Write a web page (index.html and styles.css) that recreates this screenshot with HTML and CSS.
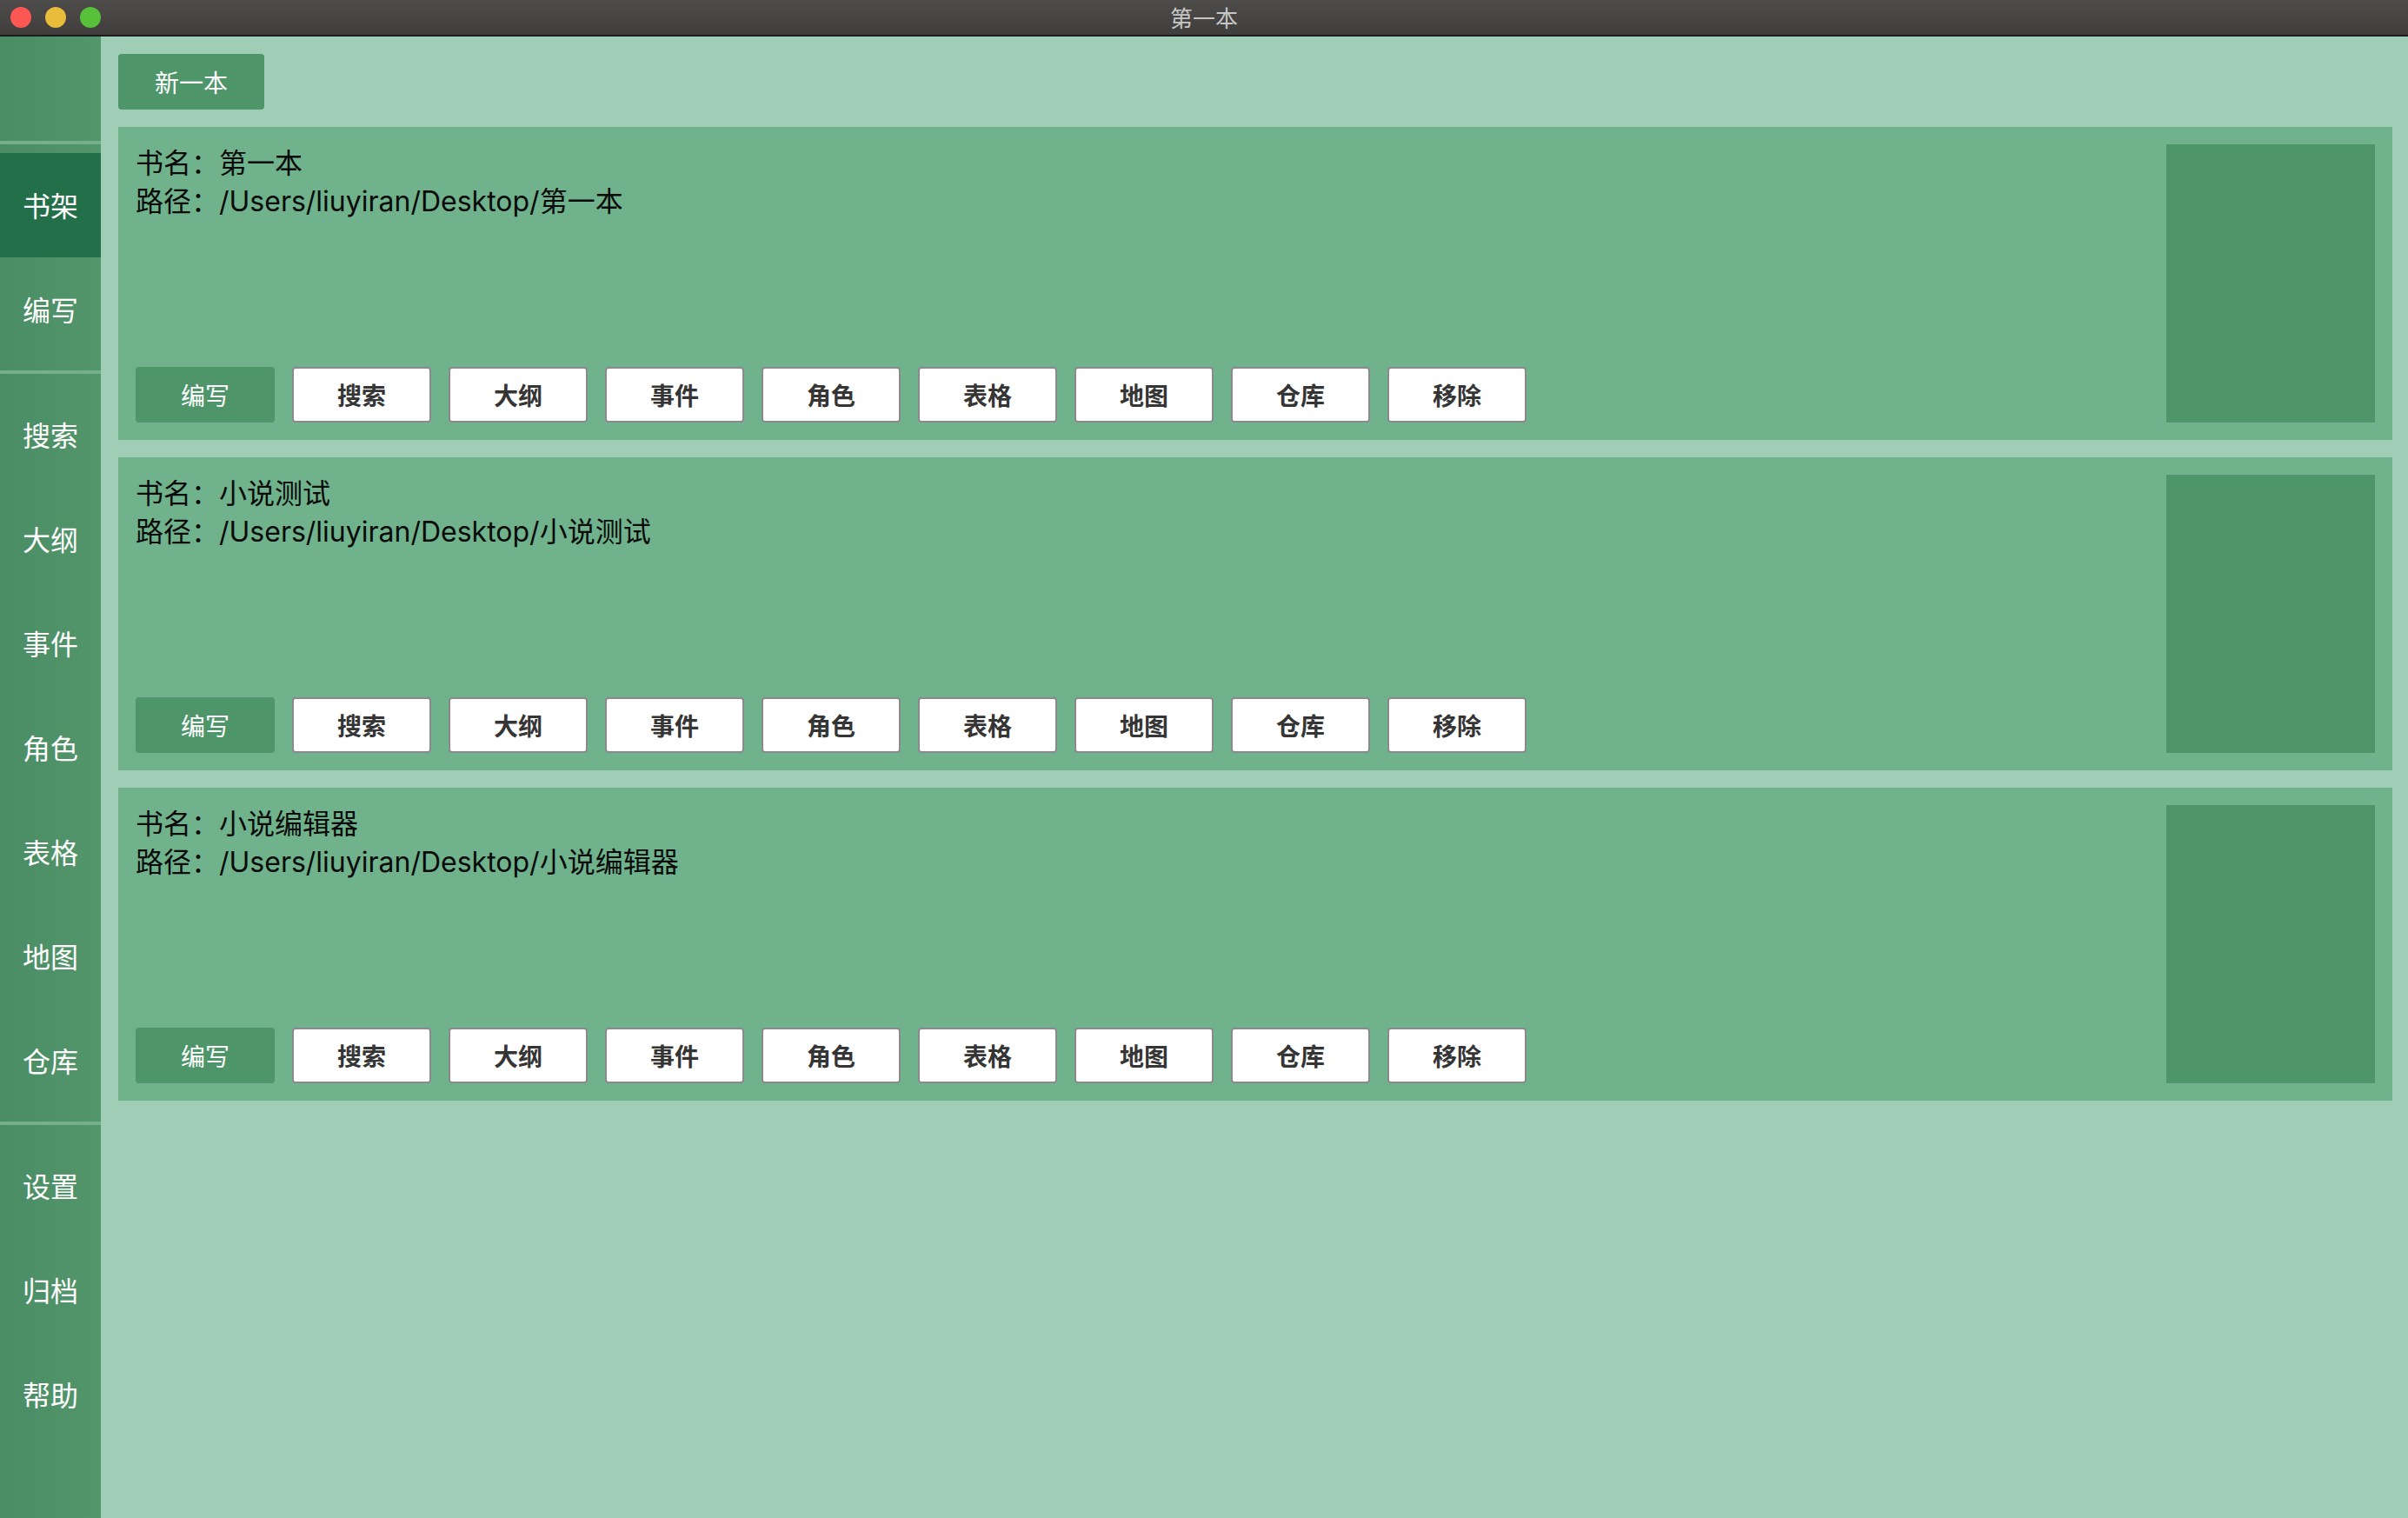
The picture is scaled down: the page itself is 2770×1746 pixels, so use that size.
FILE: index.html
```html
<!DOCTYPE html>
<html lang="zh-CN">
<head>
<meta charset="utf-8">
<title>第一本</title>
<link rel="stylesheet" href="styles.css">
</head>
<body>
<div class="window">
  <header class="titlebar">
    <div class="lights">
      <span class="light red"></span>
      <span class="light yellow"></span>
      <span class="light green"></span>
    </div>
    <div class="title">第一本</div>
    <div class="spacer"></div>
  </header>
  <div class="body">
    <nav class="sidebar">
      <div class="brand"></div>
      <div class="sep"></div>
      <div class="group">
        <div class="nav-item active">书架</div>
        <div class="nav-item">编写</div>
      </div>
      <div class="sep"></div>
      <div class="group">
        <div class="nav-item">搜索</div>
        <div class="nav-item">大纲</div>
        <div class="nav-item">事件</div>
        <div class="nav-item">角色</div>
        <div class="nav-item">表格</div>
        <div class="nav-item">地图</div>
        <div class="nav-item">仓库</div>
      </div>
      <div class="sep"></div>
      <div class="group">
        <div class="nav-item">设置</div>
        <div class="nav-item">归档</div>
        <div class="nav-item">帮助</div>
      </div>
    </nav>
    <main class="content">
      <div class="toolbar">
        <button class="btn btn-primary btn-new">新一本</button>
      </div>

      <section class="book">
        <div class="book-main">
          <div class="book-info">
            <div class="line">书名：第一本</div>
            <div class="line">路径：/Users/liuyiran/Desktop/第一本</div>
          </div>
          <div class="actions">
            <button class="btn btn-primary">编写</button>
            <button class="btn">搜索</button>
            <button class="btn">大纲</button>
            <button class="btn">事件</button>
            <button class="btn">角色</button>
            <button class="btn">表格</button>
            <button class="btn">地图</button>
            <button class="btn">仓库</button>
            <button class="btn">移除</button>
          </div>
        </div>
        <div class="cover"></div>
      </section>

      <section class="book">
        <div class="book-main">
          <div class="book-info">
            <div class="line">书名：小说测试</div>
            <div class="line">路径：/Users/liuyiran/Desktop/小说测试</div>
          </div>
          <div class="actions">
            <button class="btn btn-primary">编写</button>
            <button class="btn">搜索</button>
            <button class="btn">大纲</button>
            <button class="btn">事件</button>
            <button class="btn">角色</button>
            <button class="btn">表格</button>
            <button class="btn">地图</button>
            <button class="btn">仓库</button>
            <button class="btn">移除</button>
          </div>
        </div>
        <div class="cover"></div>
      </section>

      <section class="book">
        <div class="book-main">
          <div class="book-info">
            <div class="line">书名：小说编辑器</div>
            <div class="line">路径：/Users/liuyiran/Desktop/小说编辑器</div>
          </div>
          <div class="actions">
            <button class="btn btn-primary">编写</button>
            <button class="btn">搜索</button>
            <button class="btn">大纲</button>
            <button class="btn">事件</button>
            <button class="btn">角色</button>
            <button class="btn">表格</button>
            <button class="btn">地图</button>
            <button class="btn">仓库</button>
            <button class="btn">移除</button>
          </div>
        </div>
        <div class="cover"></div>
      </section>
    </main>
  </div>
</div>
</body>
</html>
```

FILE: styles.css
```css
* {
  box-sizing: border-box;
}

html, body {
  margin: 0;
  padding: 0;
  height: 100%;
}

body {
  font-family: "Noto Sans CJK SC", "Noto Sans", sans-serif;
  background: #a0cdb5;
  overflow: hidden;
}

.window {
  display: flex;
  flex-direction: column;
  width: 2770px;
  height: 1746px;
  overflow: hidden;
}

.titlebar {
  display: grid;
  grid-template-columns: 1fr auto 1fr;
  align-items: center;
  height: 42px;
  background: linear-gradient(to bottom, #4e4c4b, #3f3e3d);
  border-bottom: 2px solid #1c1c1c;
  flex: none;
}

.lights {
  display: flex;
  gap: 16px;
  padding-left: 12px;
}

.light {
  width: 24px;
  height: 24px;
  border-radius: 50%;
  display: block;
}

.light.red { background: #fd5753; }
.light.yellow { background: #e8bc3b; }
.light.green { background: #57c13a; }

.title {
  color: #c6c6c6;
  font-size: 26px;
  line-height: 40px;
}

.body {
  flex: 1;
  display: flex;
  min-height: 0;
}

.sidebar {
  width: 116px;
  flex: none;
  display: flex;
  flex-direction: column;
  background: linear-gradient(to right, #4a8c63, #53966c);
}

.brand {
  height: 120px;
}

.sep {
  height: 4px;
  background: #79ad8e;
}

.group {
  padding: 10px 0;
}

.nav-item {
  height: 120px;
  display: flex;
  align-items: center;
  justify-content: center;
  color: #ffffff;
  font-size: 32px;
  line-height: 1;
  padding-bottom: 3px;
}

.nav-item.active {
  background: #226f49;
}

.content {
  flex: 1;
  display: flex;
  flex-direction: column;
  gap: 20px;
  padding: 20px 18px 20px 20px;
  background: #a0cdb5;
}

.toolbar {
  display: flex;
}

.btn {
  width: 160px;
  height: 64px;
  border: 2px solid #8a8a8a;
  border-radius: 4px;
  background: #ffffff;
  color: #353535;
  font-family: "Noto Sans CJK SC", sans-serif;
  font-size: 28px;
  font-weight: 700;
  padding: 0;
}

.btn-primary {
  border: none;
  background: #4f956a;
  color: #ffffff;
  font-weight: 400;
}

.btn-new {
  width: 168px;
  font-size: 28px;
}

.book {
  display: flex;
  height: 360px;
  padding: 20px;
  gap: 20px;
  background: #6fb28c;
}

.book-main {
  flex: 1;
  display: flex;
  flex-direction: column;
  justify-content: space-between;
}

.book-info {
  color: #0a0a0a;
  font-family: "Inter", "Noto Sans CJK SC", sans-serif;
  font-size: 32px;
  line-height: 44px;
}

.actions {
  display: flex;
  gap: 20px;
}

.cover {
  width: 240px;
  height: 320px;
  flex: none;
  background: #4f956a;
}
```
